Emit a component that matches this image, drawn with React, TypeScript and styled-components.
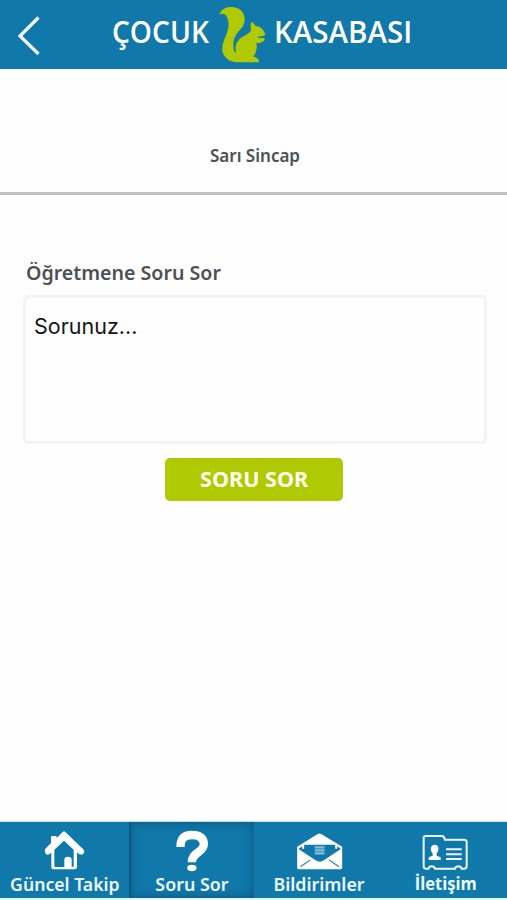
import React from "react";
import styled, { createGlobalStyle, css } from "styled-components";

const blue = "#1178aa";
const lime = "#afca03";

const GlobalStyle = createGlobalStyle`
  * { box-sizing: border-box; }
  body { margin: 0; background: #fefefe; }
`;

const Screen = styled.div`
  width: 507px;
  height: 900px;
  display: flex;
  flex-direction: column;
  overflow: hidden;
  background: #fefefe;
  color: #4b5157;
  font-family: "Noto Sans", "Open Sans", sans-serif;
  font-weight: 600;
`;

const Caption = styled.span<{ $stretch: number; $origin?: string }>`
  display: inline-block;
  white-space: nowrap;
  transform: scaleX(${(p) => p.$stretch});
  transform-origin: ${(p) => p.$origin ?? "center"};
`;

const Header = styled.header`
  height: 69px;
  flex: none;
  display: grid;
  grid-template-columns: 112px 106px 50px 1fr;
  background: ${blue};
  color: #fff;
`;

const BackButton = styled.button`
  display: flex;
  align-items: flex-start;
  border: 0;
  padding: 15px 0 0 16px;
  background: none;
`;

const BrandWord = styled.div<{ $indent?: number }>`
  padding: 12px 0 0 ${(p) => p.$indent ?? 0}px;
  font-family: "Open Sans", sans-serif;
  font-size: 30px;
  line-height: 40px;
`;

const Logo = styled.div`
  padding-top: 6px;
  line-height: 0;
`;

const ClassName = styled.section`
  height: 126px;
  flex: none;
  padding: 75px 0 0 3px;
  border-bottom: 3px solid #c1c1c1;
  font-size: 17px;
  line-height: 24px;
  text-align: center;
`;

const Form = styled.form`
  flex: 1;
  display: flex;
  flex-direction: column;
  align-items: center;
  padding: 64px 20px 0 23px;
`;

const FormLabel = styled.label`
  align-self: stretch;
  height: 36px;
  padding-left: 3px;
  font-size: 20px;
  line-height: 28px;
`;

const Question = styled.textarea`
  align-self: stretch;
  height: 149px;
  padding: 14px 8px;
  border: 3px solid #f4f4f4;
  border-radius: 5px;
  background: #fefefe;
  font: 400 21.5px/28px Inter, sans-serif;
  resize: none;
  outline: 0;
  &::placeholder {
    color: #151515;
    opacity: 1;
  }
`;

const Submit = styled.button`
  width: 178px;
  height: 43px;
  margin: 14px 2px 0 0;
  padding: 0 0 3px;
  border: 0;
  border-radius: 5px;
  background: ${lime};
  color: #fffff0;
  font: 700 22px/40px "Noto Sans", sans-serif;
`;

const TabBar = styled.nav`
  height: 79px;
  flex: none;
  display: grid;
  grid-template-columns: 129px 125px 131px 122px;
  border-top: 1px solid #c2e3f0;
  border-bottom: 2px solid #e4f6fb;
  background: ${blue};
`;

const Tab = styled.a<{ $active?: boolean }>`
  display: flex;
  flex-direction: column;
  align-items: center;
  padding-top: 8px;
  color: #eaf8ff;
  font-size: 18px;
  line-height: 24px;
  ${(p) =>
    p.$active &&
    css`
      box-shadow: inset 0 0 9px 2px #0b5f88, inset 2px 0 2px #0a5579;
    `}
`;

const TabIcon = styled.svg`
  flex: none;
  width: 48px;
  height: 44px;
`;

const TabName = styled.div<{ $shift: number; $sansI?: boolean }>`
  margin-top: ${(p) => p.$shift}px;
  ${(p) => p.$sansI && css`font-family: "Open Sans", sans-serif; font-weight: 700;`}
`;

const BackIcon = () => (
  <svg width="26" height="42" fill="none" stroke="#f4fcff" strokeWidth="3.2">
    <path d="M22.500 2.500 4 21 22.500 39" />
  </svg>
);

const SquirrelIcon = () => (
  <svg width="50" height="60" viewBox="24 18 150 180" fill={lime}>
    <path d="M27 46C33 29 46 20 65 21c23 0 39 15 39 36 0 18-8 26-18 37-10 11-16 24-16 39 0 10 1 17 5 24 1 2 3 1 3-1-3-14-1-25 8-36 10-11 24-14 33-23 5-5 4-11 3-18-1-5 1-10 4-14 4 4 8 8 11 13 11 1 20 7 24 15 3 5 6 10 4 12-3 4-13 4-20 5-1 1-1 3-1 4 6 1 11-1 17 0 4 1 4 6 1 8-3 3-7 5-11 6-4 1-9 1-12 0 3 12 1 23-4 34-2 4-4 6-4 9 3 0 9 1 12 5 4 3 4 6 4 11H82c-22 0-38-12-44-30-4-16 2-31 9-48 6-15 10-28 8-43-2-20-14-31-28-21Z" />
  </svg>
);

const HomeIcon = () => (
  <TabIcon viewBox="122 45 144 132" fill="#fff">
    <path d="M135 101 152 84V66q0-3 3-3h11q3 0 3 3v3l18-18q4-4 8 0l53 51q7 8 1 14-5 5-13 1l-6-5v44q0 7-7 7h-62q-8 0-8-7v-43l-5 4q-6 5-12 0-5-8-1-16Zm27 3v48q0 4 4 4h26v-22q0-9 11-9t11 9v22h2q4 0 4-4v-48l-29-27Z" />
  </TabIcon>
);

const QuestionIcon = () => (
  <TabIcon viewBox="142.5 45 144 132" fill="none">
    <path d="M180 96C180 70 192 60 214 60c24 0 36 10 36 27 0 27-36 23-36 55" stroke="#fff" strokeWidth="25" />
    <ellipse cx="214" cy="159" rx="14" ry="9.500" fill="#fff" />
  </TabIcon>
);

const MailIcon = () => (
  <TabIcon viewBox="136.5 45 144 132">
    <path d="m140 95 62-38q5-3 10 0l63 38v63q0 5-5 5H145q-5 0-5-5Z" fill="#fff" />
    <path d="M161 89h93v12h6v-7l11 8-51 34q-12 8-25 0l-51-34 11-8v7h6Z" fill={blue} />
    <path d="M193 97h29M193 106h29M193 115h29" stroke="#85bed9" strokeWidth="7" />
    <path d="m150 155 29-20M265 155l-29-20" stroke="#3f94bb" strokeWidth="4" />
  </TabIcon>
);

const ContactIcon = () => (
  <TabIcon viewBox="126 45 144 132" fill="none" stroke="#edfaff" strokeWidth="6">
    <path d="M131 69q0-6 6-6h49q6 0 9 11h57q8 0 8 7v73q0 7-7 7h-8q-2-7-10-7t-10 7h-60q-2-7-10-7t-10 7h-8q-6 0-6-7Z" />
    <path d="M198 103h47M198 118h47M198 132h47" />
    <path d="M164 89c-14 0-14 17-6 26v7l-12 5v8h36v-8l-12-5v-7c8-9 8-26-6-26Z" fill="#fff" stroke="none" />
  </TabIcon>
);

const tabs = [
  { name: "Güncel Takip", icon: <HomeIcon />, stretch: 0.98, shift: -2 },
  { name: "Soru Sor", icon: <QuestionIcon />, stretch: 0.99, shift: -2, active: true },
  { name: "Bildirimler", icon: <MailIcon />, stretch: 0.99, shift: -2 },
  { name: "İletişim", icon: <ContactIcon />, stretch: 0.92, shift: -3, sansI: true },
];

export default function App() {
  return (
    <>
      <GlobalStyle />
      <Screen>
        <Header>
          <BackButton aria-label="Geri" type="button"><BackIcon /></BackButton>
          <BrandWord><Caption $stretch={0.94} $origin="left">ÇOCUK</Caption></BrandWord>
          <Logo><SquirrelIcon /></Logo>
          <BrandWord $indent={6}><Caption $stretch={0.983} $origin="left">KASABASI</Caption></BrandWord>
        </Header>
        <ClassName><Caption $stretch={1}>Sarı Sincap</Caption></ClassName>
        <Form>
          <FormLabel htmlFor="question"><Caption $stretch={0.98} $origin="left">Öğretmene Soru Sor</Caption></FormLabel>
          <Question id="question" placeholder="Sorunuz..." />
          <Submit type="button"><Caption $stretch={0.98}>SORU SOR</Caption></Submit>
        </Form>
        <TabBar>
          {tabs.map((t) => (
            <Tab key={t.name} $active={t.active}>
              {t.icon}
              <TabName $shift={t.shift} $sansI={t.sansI}><Caption $stretch={t.stretch}>{t.name}</Caption></TabName>
            </Tab>
          ))}
        </TabBar>
      </Screen>
    </>
  );
}
